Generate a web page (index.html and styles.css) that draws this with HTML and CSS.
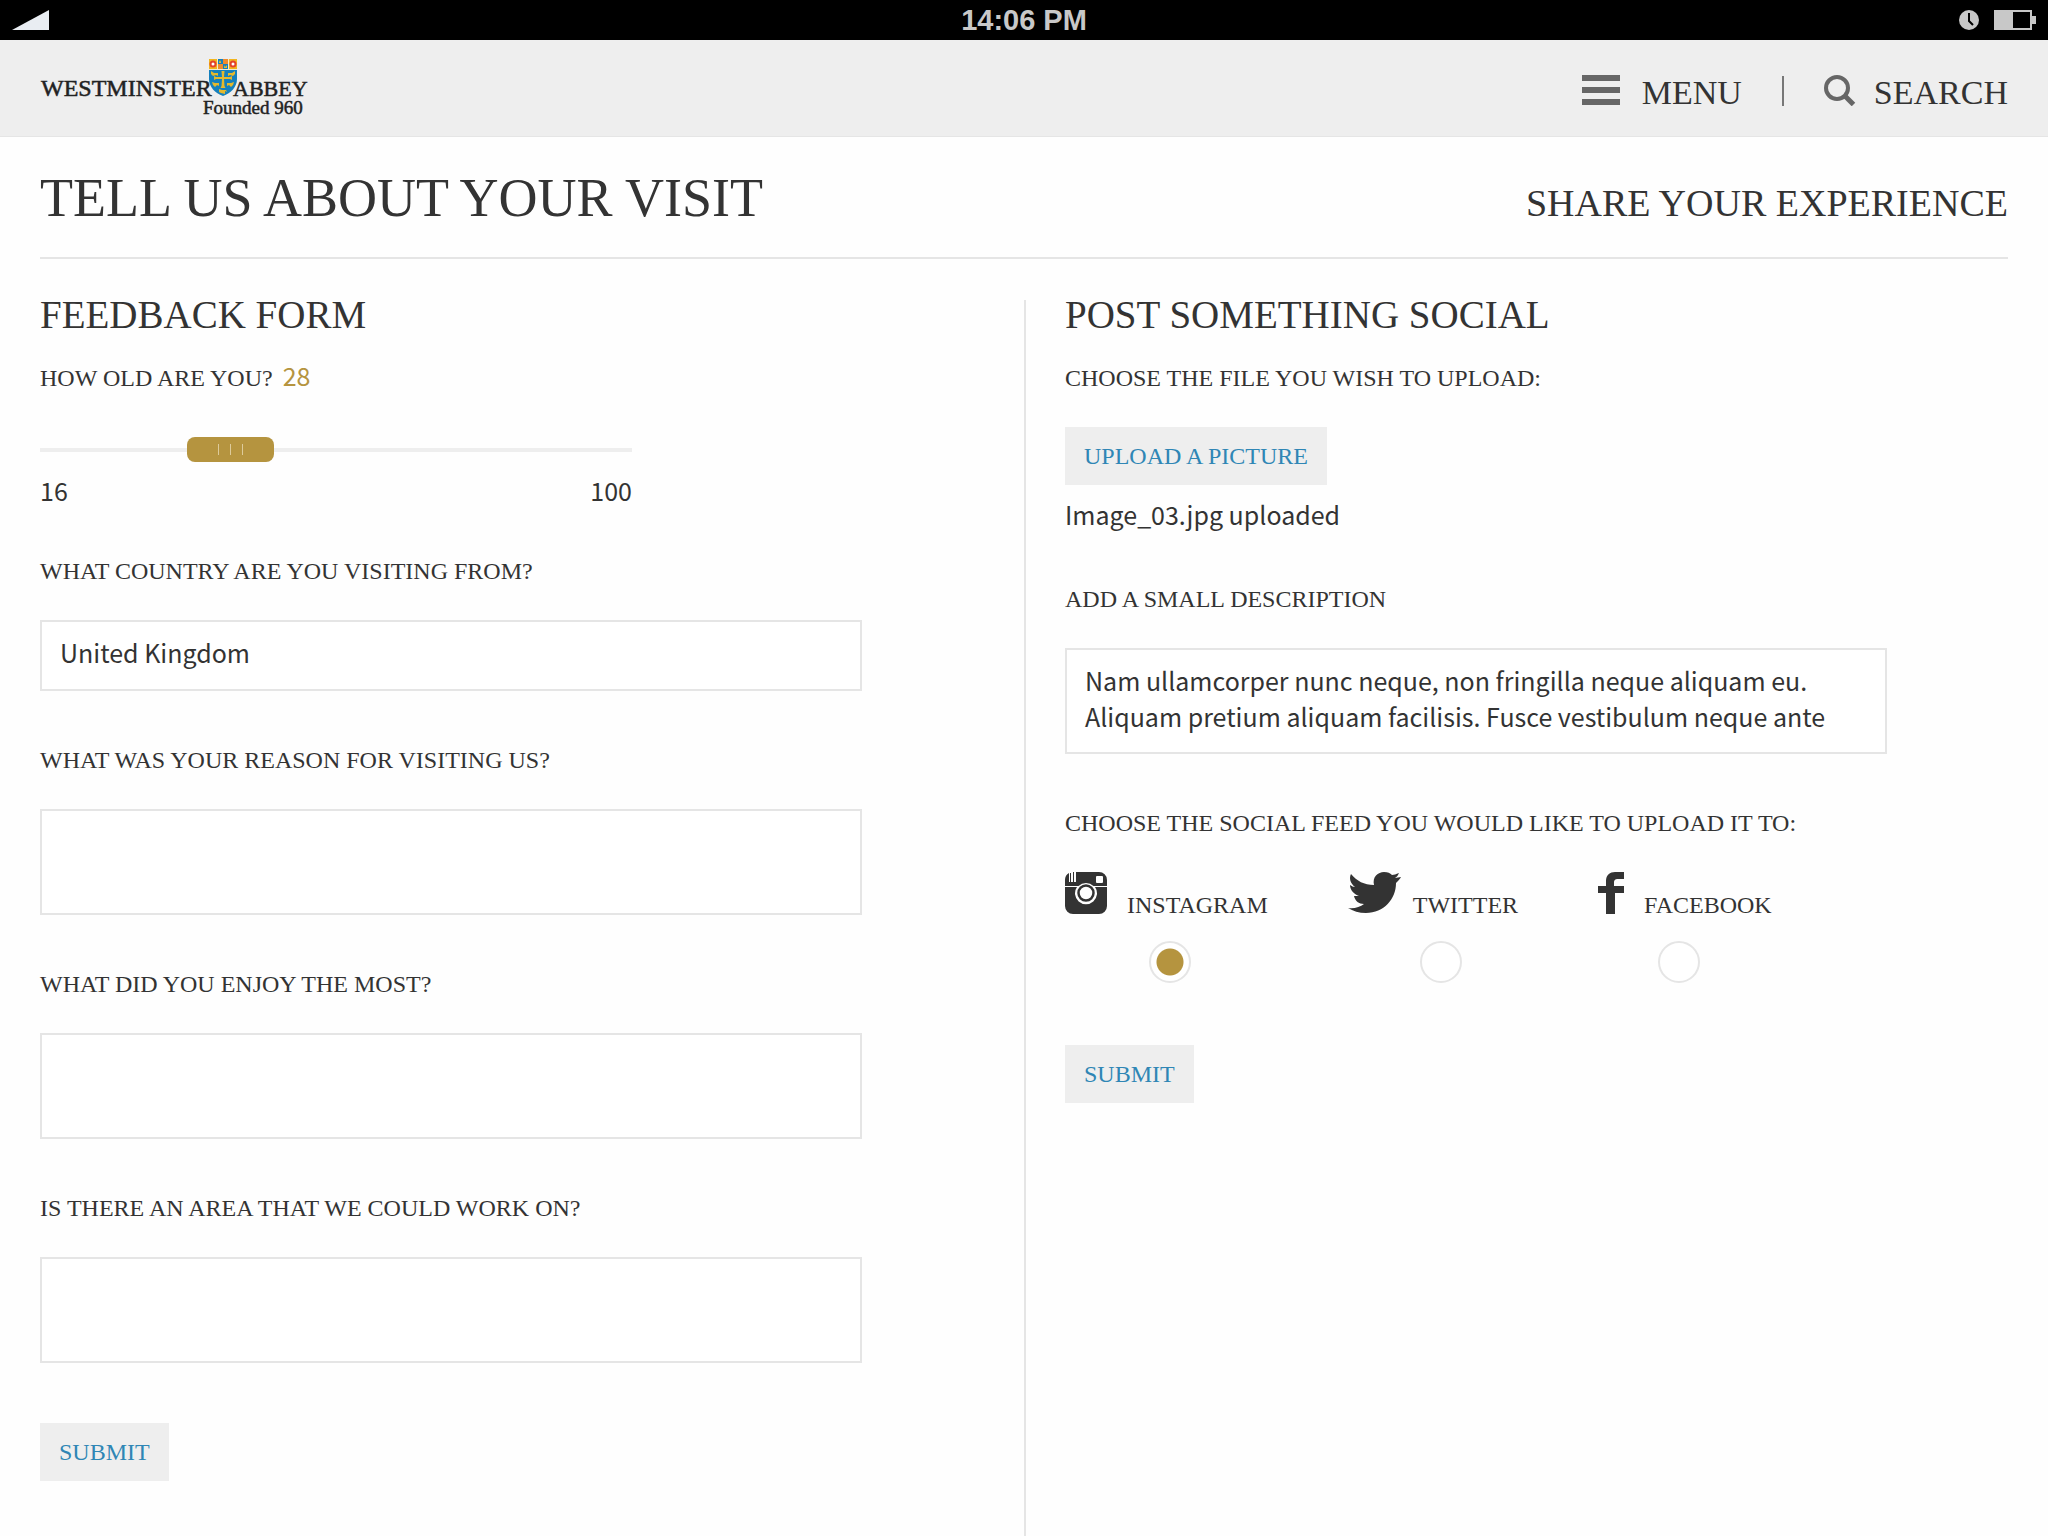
FILE: index.html
```html
<!DOCTYPE html>
<html lang="en">
<head>
<meta charset="utf-8">
<meta name="viewport" content="width=device-width, initial-scale=1">
<title>Tell us about your visit - Westminster Abbey</title>
<link rel="stylesheet" href="styles.css">
</head>
<body>
<div class="status-bar">
  <svg class="signal" viewBox="0 0 37 20" width="37" height="20" aria-hidden="true"><path d="M0 20 37 0v20z" fill="#e9edf2"/></svg>
  <span class="time">14:06 PM</span>
  <div class="status-icons">
    <svg viewBox="0 0 20 20" width="20" height="20" aria-hidden="true"><circle cx="10" cy="10" r="10" fill="#c8c8c8"/><path d="M10 3v8l4 4" fill="none" stroke="#000" stroke-width="2"/></svg>
    <svg viewBox="0 0 42 20" width="42" height="20" aria-hidden="true"><path d="M0 0h38v6h4v8h-4v6H0zM19 2v16h17V2z" fill="#c8c8c8" fill-rule="evenodd"/></svg>
  </div>
</div>

<header class="site-header">
  <a class="logo" href="#" aria-label="Westminster Abbey, founded 960">
    <svg viewBox="0 0 268 62" width="268" height="62">
      <g class="logo-text">
        <text x="1" y="38" font-size="24">WESTMINSTER</text>
        <text x="193" y="38" font-size="22">ABBEY</text>
        <text x="163" y="56" font-size="19">Founded 960</text>
      </g>
      <path d="M169 1h28v20c0 8-6 14-14 17-8-3-14-9-14-17z" fill="#1580bd"/>
      <path d="M169 1h8v10h-8zM189 1h8v10h-8z" fill="#f2b51d"/>
      <path d="M183 1h5v5h-5zM178 6h5v5h-5z" fill="#ef8b2c"/>
      <path d="M169 11.5h28M177.500 1v10M188.500 1v10" stroke="#f3ead0"/>
      <g fill="#fff" stroke="#e4432b" stroke-width="2"><circle cx="173" cy="6" r="2.500"/><circle cx="193" cy="6" r="2.500"/></g>
      <g fill="#e5b92c">
        <path d="M181.500 13h3l-.5 6h6l2-1v4l-2-1h-6l.5 7 1 2h-5l1-2 .5-7h-6l-2 1v-4l2 1h6z"/>
        <path d="M171 13l3 2h4v3l-2-1-3 1-2-2zM195 13l-3 2h-4v3l2-1 3 1 2-2zM172 24l3 1h4v3l-2-1-2 2-2-2zM194 24l-3 1h-4v3l2-1 2 2 2-2zM179 31l3 1h4l1 2-2-1v3l-4-1-2-1z"/>
        <path d="M179 2l1 2 1-2v3h-2zM184 7l1 2 2-2v3h-3z"/>
      </g>
    </svg>
  </a>
  <nav class="site-nav">
    <button class="nav-button menu-button" type="button">
      <svg viewBox="0 0 38 32" width="38" height="32" aria-hidden="true"><path d="M0 1h38v6H0zM0 13h38v6H0zM0 25h38v6H0z" fill="#666"/></svg>
      MENU
    </button>
    <span class="nav-separator"></span>
    <button class="nav-button" type="button">
      <svg viewBox="0 0 32 32" width="32" height="32" aria-hidden="true"><g fill="none" stroke="#666"><circle cx="13" cy="14" r="11" stroke-width="4"/><path d="M20.500 21.500l9 9" stroke-width="5"/></g></svg>
      SEARCH
    </button>
  </nav>
</header>

<main class="page">
  <div class="page-title">
    <h1>TELL US ABOUT YOUR VISIT</h1>
    <p class="tagline">SHARE YOUR EXPERIENCE</p>
  </div>

  <div class="columns">
    <form class="column">
      <h2>FEEDBACK FORM</h2>
      <div class="age">
        <label for="age">HOW OLD ARE YOU? <output class="age-value" for="age">28</output></label>
        <input class="slider" id="age" type="range" min="16" max="100" step="any" value="40.5">
        <div class="scale"><span>16</span><span>100</span></div>
      </div>
      <div class="field">
        <label for="country">WHAT COUNTRY ARE YOU VISITING FROM?</label>
        <input class="text-box" id="country" type="text" value="United Kingdom">
      </div>
      <div class="field">
        <label for="reason">WHAT WAS YOUR REASON FOR VISITING US?</label>
        <textarea class="text-box" id="reason"></textarea>
      </div>
      <div class="field">
        <label for="enjoyed">WHAT DID YOU ENJOY THE MOST?</label>
        <textarea class="text-box" id="enjoyed"></textarea>
      </div>
      <div class="field">
        <label for="improve">IS THERE AN AREA THAT WE COULD WORK ON?</label>
        <textarea class="text-box" id="improve"></textarea>
      </div>
      <button class="button submit" type="submit">SUBMIT</button>
    </form>

    <form class="column column-social">
      <h2>POST SOMETHING SOCIAL</h2>
      <div class="upload">
        <label for="upload">CHOOSE THE FILE YOU WISH TO UPLOAD:</label>
        <button class="button" id="upload" type="button">UPLOAD A PICTURE</button>
        <p class="file-name">Image_03.jpg uploaded</p>
      </div>
      <div class="field">
        <label for="description">ADD A SMALL DESCRIPTION</label>
        <textarea class="text-box" id="description">Nam ullamcorper nunc neque, non fringilla neque aliquam eu.
Aliquam pretium aliquam facilisis. Fusce vestibulum neque ante</textarea>
      </div>
      <fieldset class="field feeds">
        <legend>CHOOSE THE SOCIAL FEED YOU WOULD LIKE TO UPLOAD IT TO:</legend>
        <div class="feed-list">
          <div class="feed instagram">
            <label for="instagram">
              <svg viewBox="0 0 42 42" width="42" height="42" aria-hidden="true"><path d="M8 0h26a8 8 0 0 1 8 8v6H28.500a11 11 0 0 0-15 0H0V8a8 8 0 0 1 4-7v9h1V1h1v9h2V0h1v10h2V0zM32 4a1 1 0 0 0-1 1v5a1 1 0 0 0 1 1h5a1 1 0 0 0 1-1V5a1 1 0 0 0-1-1zM0 15h12a11 11 0 1 0 18 0h12v19a8 8 0 0 1-8 8H8a8 8 0 0 1-8-8z" fill="#333" fill-rule="evenodd"/><circle cx="21" cy="21" r="7.500" fill="#fff" stroke="#333" stroke-width="2.500"/></svg>
              INSTAGRAM
            </label>
            <input class="radio" id="instagram" type="radio" name="feed" checked>
          </div>
          <div class="feed twitter">
            <label for="twitter">
              <svg viewBox="0 0 53 42" width="53" height="42" aria-hidden="true"><path d="M3 2c6 7 13 11 23 11C24 5 30 0 36 0c4 0 6 1 8 3 2 0 4-1 7-2-1 2-2 4-4 5 2 0 4-1 6-1-1 2-3 4-5 6 0 16-12 30-30 30-7 0-13-2-18-5 6 1 12-1 16-4-5 0-9-3-10-8h5C6 22 2 18 2 13c2 1 3 2 5 2C2 11 1 6 3 2z" fill="#333"/></svg>
              TWITTER
            </label>
            <input class="radio" id="twitter" type="radio" name="feed">
          </div>
          <div class="feed facebook">
            <label for="facebook">
              <svg viewBox="0 0 26 42" width="26" height="42" aria-hidden="true"><path d="M26 0v7h-6c-3 0-4 1-4 4v3h10v7h-9v21H8V21H0v-7h8V9c0-6 4-9 9-9z" fill="#333"/></svg>
              FACEBOOK
            </label>
            <input class="radio" id="facebook" type="radio" name="feed">
          </div>
        </div>
      </fieldset>
      <button class="button submit" type="submit">SUBMIT</button>
    </form>
  </div>
</main>
</body>
</html>
```
FILE: styles.css
```css
:root {
  --serif: "Liberation Serif", serif;
  --sans: "Noto Sans CJK SC", sans-serif;
  --ink: #333;
  --gold: #b5943f;
  --line: #e5e5e5;
  --panel: #eee;
}

* {
  box-sizing: border-box;
}

body {
  display: flex;
  flex-direction: column;
  min-height: 100vh;
  margin: 0;
  background: #fefefe;
  color: var(--ink);
  font-family: var(--serif);
  font-size: 24px;
}

h1,
h2,
p {
  margin: 0;
  font-weight: 400;
}

svg {
  display: block;
  flex: none;
}

/* Status bar */
.status-bar {
  display: grid;
  grid-template-columns: 1fr auto 1fr;
  align-items: center;
  height: 40px;
  padding: 0 12px;
  background: #000;
}

.time {
  color: #c8c8c8;
  font: 700 29px/36px "Liberation Sans", sans-serif;
}

.status-icons {
  display: flex;
  gap: 15px;
  justify-content: flex-end;
}

/* Header */
.site-header {
  display: flex;
  justify-content: space-between;
  align-items: flex-start;
  padding: 0 40px;
  border-bottom: 1px solid var(--line);
  background: var(--panel);
}

.logo {
  padding: 18px 0 16px;
}

.logo-text {
  fill: #222;
  stroke: #222;
  stroke-width: 0.5;
  font-family: var(--serif);
}

.site-nav {
  display: flex;
  gap: 40px;
  padding-top: 34px;
}

.nav-button {
  display: flex;
  gap: 18px;
  padding: 0;
  border: 0;
  background: none;
  color: var(--ink);
  font: 34px/38px var(--serif);
}

.menu-button {
  gap: 22px;
}

.nav-separator {
  width: 2px;
  height: 30px;
  margin-top: 2px;
  background: #777;
}

/* Page */
.page {
  display: flex;
  flex: 1;
  flex-direction: column;
  padding: 0 40px;
}

.page-title {
  display: flex;
  justify-content: space-between;
  align-items: baseline;
  padding: 31px 0 29px;
  border-bottom: 2px solid var(--line);
}

h1 {
  font-size: 54px;
  line-height: 60px;
}

.tagline {
  font-size: 38px;
  line-height: 48px;
}

h2 {
  margin-bottom: 33px;
  font-size: 39px;
  line-height: 30px;
}

.columns {
  display: grid;
  flex: 1;
  grid-template-columns: 1fr 1fr;
  padding-top: 41px;
}

.column {
  padding-bottom: 54px;
}

.column-social {
  padding-left: 39px;
  border-left: 2px solid var(--line);
}

label,
legend {
  display: block;
  line-height: 30px;
}

/* Age slider */
.age,
.upload {
  display: flex;
  flex-direction: column;
  align-items: flex-start;
}

.age-value {
  margin-left: 4px;
  color: var(--gold);
  font: 25px/24px var(--sans);
}

.slider {
  width: 100%;
  max-width: 592px;
  height: 25px;
  margin: 44px 0 0;
  appearance: none;
  background: linear-gradient(var(--panel), var(--panel)) 0 11px / 100% 4px no-repeat;
}

.slider::-webkit-slider-thumb {
  width: 87px;
  height: 25px;
  border-radius: 8px;
  appearance: none;
  background:
    linear-gradient(#ddcb9b, #ddcb9b) 31px 7px / 1px 11px no-repeat,
    linear-gradient(#ddcb9b, #ddcb9b) 43px 7px / 1px 11px no-repeat,
    linear-gradient(#ddcb9b, #ddcb9b) 55px 7px / 1px 11px no-repeat,
    var(--gold);
}

.scale {
  display: flex;
  justify-content: space-between;
  width: 100%;
  max-width: 592px;
  margin-top: 16px;
  font: 25px/24px var(--sans);
}

/* Fields */
.field {
  margin: 54px 0 0;
}

.text-box {
  display: block;
  width: 100%;
  max-width: 822px;
  height: 71px;
  margin-top: 34px;
  padding: 0 18px 8px;
  border: 2px solid var(--line);
  border-radius: 0;
  background: #fff;
  color: var(--ink);
  font: 25px/36px var(--sans);
}

textarea.text-box {
  height: 106px;
  padding: 12px 18px;
  overflow: hidden;
  resize: none;
}

.button {
  height: 58px;
  padding: 0 19px;
  border: 0;
  background: var(--panel);
  color: #2f86b5;
  font: 24px/32px var(--serif);
}

.submit {
  margin-top: 60px;
}

.upload .button {
  margin-top: 34px;
}

.file-name {
  margin-top: 13px;
  font: 25px/32px var(--sans);
}

/* Social feeds */
.feeds {
  padding: 0;
  border: 0;
}

.feeds legend {
  padding: 0;
}

.feed-list {
  display: flex;
  gap: 80px;
  padding: 34px 0 2px;
}

.feed label {
  display: flex;
  gap: 20px;
  height: 42px;
  align-items: flex-end;
  line-height: 18px;
}

.feed.twitter label {
  gap: 12px;
}

.radio {
  display: block;
  width: 42px;
  height: 42px;
  margin: 27px 0 0 84px;
  border: 2px solid var(--line);
  border-radius: 50%;
  appearance: none;
  background: #fff;
}

.twitter .radio {
  margin-left: 72px;
}

.facebook .radio {
  margin-left: 60px;
}

.radio:checked {
  background: radial-gradient(circle, var(--gold) 13px, #fff 14px);
}
```
